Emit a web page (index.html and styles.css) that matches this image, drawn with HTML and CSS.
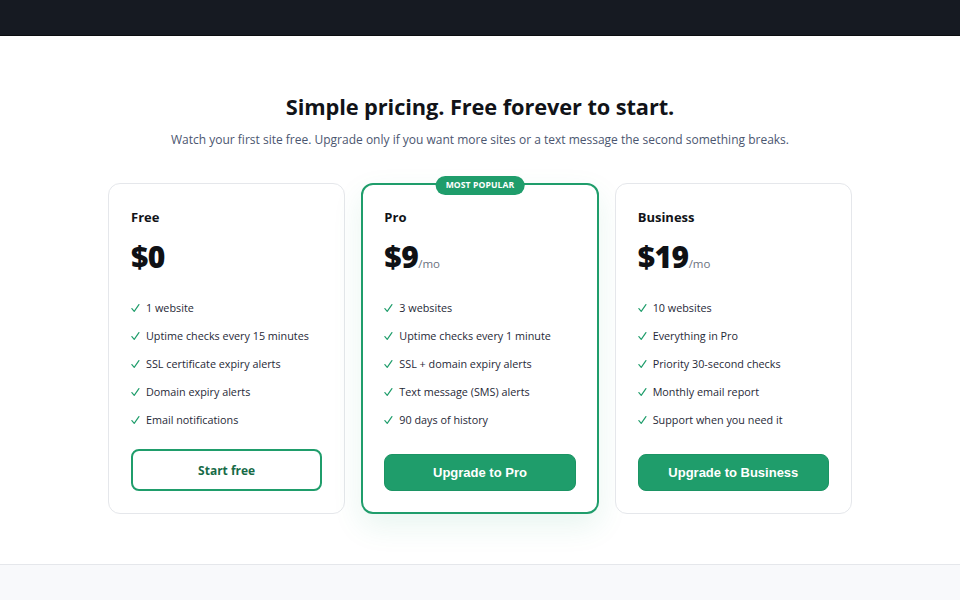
FILE: index.html
```html
<!DOCTYPE html>
<html lang="en">
<head>
<meta charset="utf-8">
<title>Pricing</title>
<link rel="stylesheet" href="styles.css">
</head>
<body>
<header class="topbar"></header>
<section class="pricing">
  <h2 class="title">Simple pricing. Free forever to start.</h2>
  <p class="subtitle">Watch your first site free. Upgrade only if you want more sites or a text message the second something breaks.</p>
  <div class="plans">
    <div class="plan">
      <div class="plan-name">Free</div>
      <div class="price">$0</div>
      <ul class="features">
        <li><svg class="check" viewBox="0 0 10 10"><path d="M1 5.6 L3.6 8.8 L8.8 1.2"/></svg>1 website</li>
        <li><svg class="check" viewBox="0 0 10 10"><path d="M1 5.6 L3.6 8.8 L8.8 1.2"/></svg>Uptime checks every 15 minutes</li>
        <li><svg class="check" viewBox="0 0 10 10"><path d="M1 5.6 L3.6 8.8 L8.8 1.2"/></svg>SSL certificate expiry alerts</li>
        <li><svg class="check" viewBox="0 0 10 10"><path d="M1 5.6 L3.6 8.8 L8.8 1.2"/></svg>Domain expiry alerts</li>
        <li><svg class="check" viewBox="0 0 10 10"><path d="M1 5.6 L3.6 8.8 L8.8 1.2"/></svg>Email notifications</li>
      </ul>
      <a class="btn btn-outline" href="#">Start free</a>
    </div>
    <div class="plan plan-featured">
      <span class="badge">MOST POPULAR</span>
      <div class="plan-name">Pro</div>
      <div class="price">$9<span class="per">/mo</span></div>
      <ul class="features">
        <li><svg class="check" viewBox="0 0 10 10"><path d="M1 5.6 L3.6 8.8 L8.8 1.2"/></svg>3 websites</li>
        <li><svg class="check" viewBox="0 0 10 10"><path d="M1 5.6 L3.6 8.8 L8.8 1.2"/></svg>Uptime checks every 1 minute</li>
        <li><svg class="check" viewBox="0 0 10 10"><path d="M1 5.6 L3.6 8.8 L8.8 1.2"/></svg>SSL + domain expiry alerts</li>
        <li><svg class="check" viewBox="0 0 10 10"><path d="M1 5.6 L3.6 8.8 L8.8 1.2"/></svg>Text message (SMS) alerts</li>
        <li><svg class="check" viewBox="0 0 10 10"><path d="M1 5.6 L3.6 8.8 L8.8 1.2"/></svg>90 days of history</li>
      </ul>
      <button class="btn btn-solid">Upgrade to Pro</button>
    </div>
    <div class="plan">
      <div class="plan-name">Business</div>
      <div class="price">$19<span class="per">/mo</span></div>
      <ul class="features">
        <li><svg class="check" viewBox="0 0 10 10"><path d="M1 5.6 L3.6 8.8 L8.8 1.2"/></svg>10 websites</li>
        <li><svg class="check" viewBox="0 0 10 10"><path d="M1 5.6 L3.6 8.8 L8.8 1.2"/></svg>Everything in Pro</li>
        <li><svg class="check" viewBox="0 0 10 10"><path d="M1 5.6 L3.6 8.8 L8.8 1.2"/></svg>Priority 30-second checks</li>
        <li><svg class="check" viewBox="0 0 10 10"><path d="M1 5.6 L3.6 8.8 L8.8 1.2"/></svg>Monthly email report</li>
        <li><svg class="check" viewBox="0 0 10 10"><path d="M1 5.6 L3.6 8.8 L8.8 1.2"/></svg>Support when you need it</li>
      </ul>
      <button class="btn btn-solid">Upgrade to Business</button>
    </div>
  </div>
</section>
<footer class="below"></footer>
</body>
</html>
```
FILE: styles.css
```css
* { box-sizing: border-box; }
html, body { margin: 0; padding: 0; }
body {
  font-family: "Open Sans", "Noto Sans", sans-serif;
  color: #111827;
  background: #fff;
}
.topbar {
  height: 36px;
  background: #161a22;
  border-bottom: 1px solid #0b0d10;
}
.pricing {
  padding: 55px 0 50px;
  text-align: center;
}
.title {
  margin: 0;
  font-size: 21.8px;
  line-height: 32px;
  font-weight: 700;
  color: #111318;
  letter-spacing: -0.1px;
}
.subtitle {
  margin: 7px 0 0;
  font-size: 12px;
  line-height: 20px;
  color: #4b5670;
}
.plans {
  width: 744px;
  margin: 33px auto 0;
  display: grid;
  grid-template-columns: repeat(3, 1fr);
  gap: 16px;
  text-align: left;
}
.plan {
  position: relative;
  display: flex;
  flex-direction: column;
  border: 1px solid #e5e7eb;
  border-radius: 12px;
  padding: 22px;
  background: #fff;
}
.plan-featured {
  border: 2px solid #1f9d6b;
  padding: 21px;
  box-shadow: 0 12px 30px rgba(31, 157, 107, 0.10);
}
.badge {
  position: absolute;
  top: -9px;
  left: 50%;
  transform: translateX(-50%);
  height: 19px;
  padding: 0 10px;
  border-radius: 10px;
  background: #1f9d6b;
  color: #fff;
  font-size: 8.6px;
  font-weight: 700;
  line-height: 19px;
  letter-spacing: 0.1px;
  white-space: nowrap;
}
.plan-name {
  font-size: 13px;
  line-height: 22px;
  font-weight: 700;
  color: #111318;
}
.price {
  margin-top: 9px;
  height: 40px;
  font-size: 30px;
  line-height: 40px;
  font-weight: 800;
  color: #0f1115;
  letter-spacing: -0.5px;
}
.per {
  display: inline-block;
  line-height: 1;
  font-size: 11.5px;
  font-weight: 400;
  color: #6b7280;
  letter-spacing: 0;
}
.features {
  list-style: none;
  margin: 17px 0 15px;
  padding: 0;
}
.features li {
  display: flex;
  align-items: center;
  height: 28px;
  font-size: 10.8px;
  line-height: 28px;
  color: #1f2937;
}
.check {
  width: 9px;
  height: 10px;
  margin: 0 6px 0 0;
  flex: none;
  fill: none;
  stroke: #1f9d6b;
  stroke-width: 1.3;
  stroke-linecap: round;
  stroke-linejoin: round;
}
.btn {
  margin-top: auto;
  display: flex;
  align-items: center;
  justify-content: center;
  width: 100%;
  border-radius: 8px;
  text-decoration: none;
  font-weight: 700;
  font-size: 12px;
}
.btn-outline {
  height: 42px;
  border: 2px solid #1f9d6b;
  color: #176b47;
  background: #fff;
}
.btn-solid {
  height: 37px;
  border: 1px solid #1c9464;
  background: #1f9d6b;
  color: #fff;
  font-family: "Liberation Sans", Arial, sans-serif;
  font-size: 13px;
  cursor: pointer;
}
.below {
  height: 40px;
  background: #f8f9fb;
  border-top: 1px solid #e5e7eb;
}
```
